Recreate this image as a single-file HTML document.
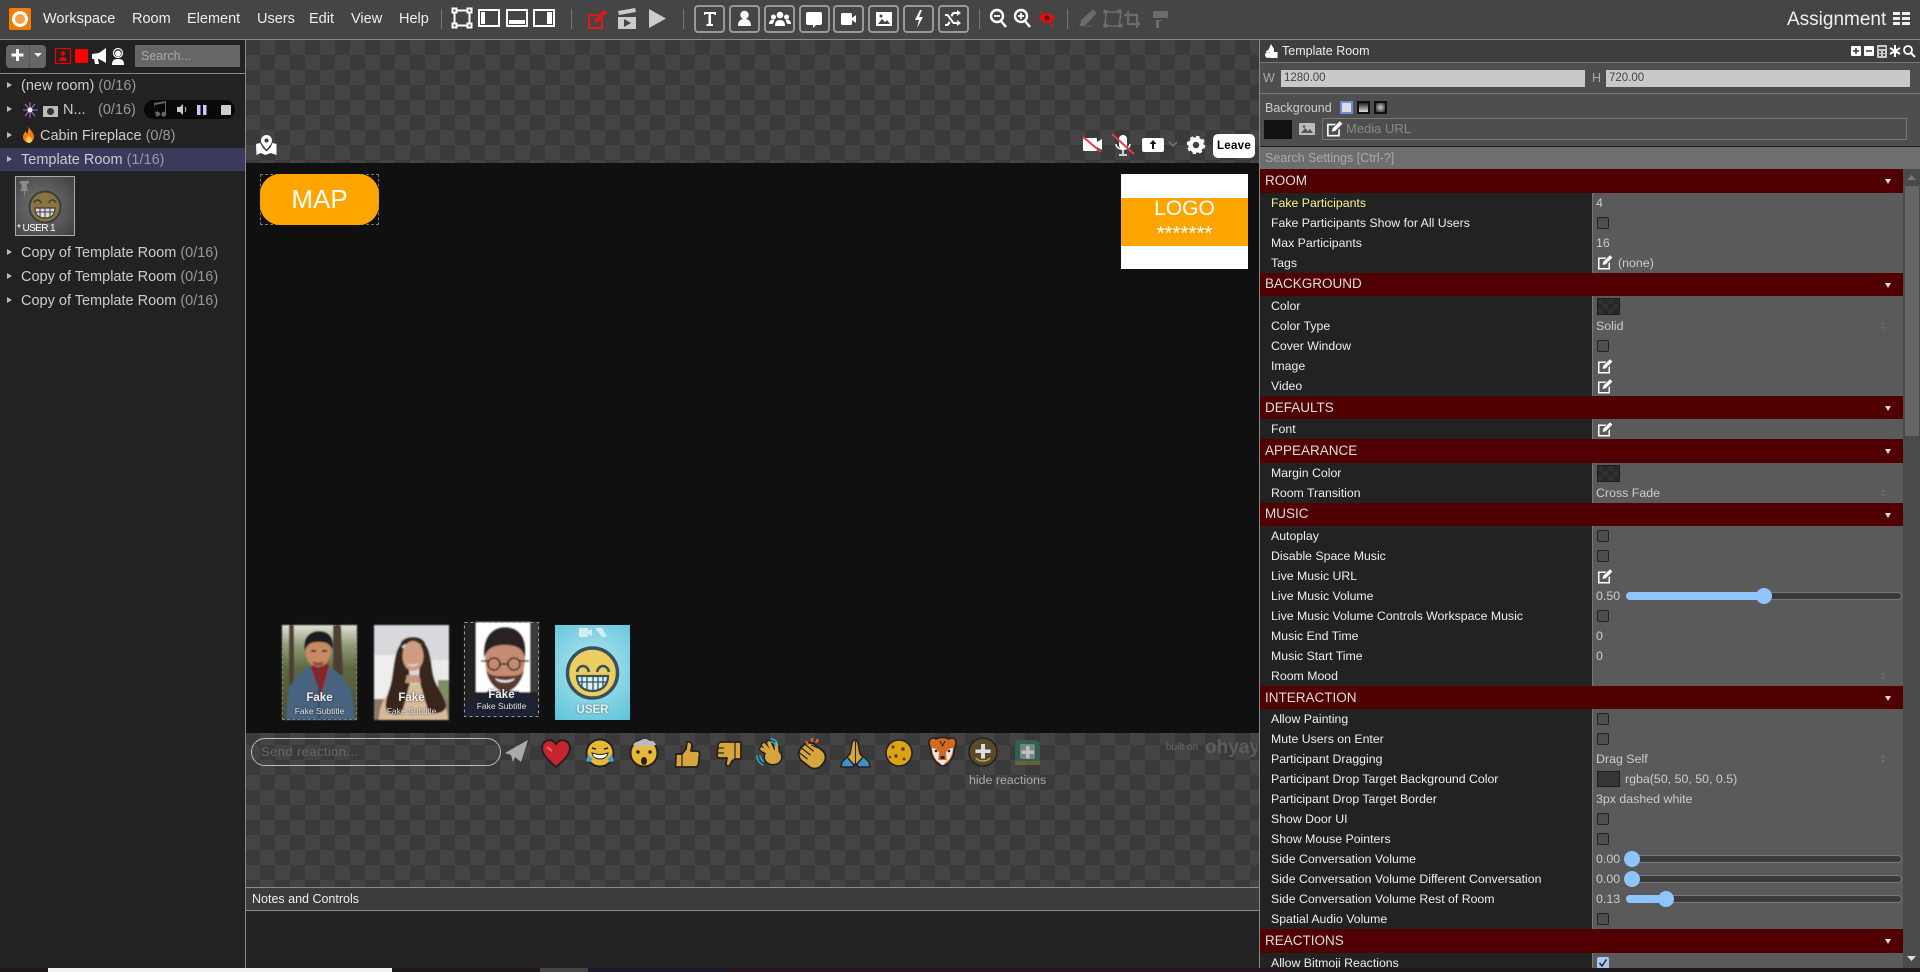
<!DOCTYPE html>
<html><head><meta charset="utf-8"><title>Assignment</title>
<style>
*{box-sizing:border-box}
html,body{margin:0;padding:0;width:1920px;height:972px;overflow:hidden;background:#222;font-family:"Liberation Sans",sans-serif;color:#eee}
.a{position:absolute}
svg{position:absolute;overflow:visible}
.chk{background-color:#3a3a3a;background-image:conic-gradient(#444 25%,#3a3a3a 0 50%,#444 0 75%,#3a3a3a 0);background-size:30px 30px;background-position:-1px 0}
.m{position:absolute;top:10px;font-size:14.5px;line-height:18px;color:#eee}
.sep{position:absolute;top:9px;width:1px;height:20px;background:#777}
.box{position:absolute;top:5px;width:31px;height:28px;border:2px solid #999;border-radius:4px}
.rm{position:absolute;left:21px;font-size:14.5px;line-height:18px;color:#ccc;white-space:nowrap}
.rm i{font-style:normal;color:#999}
.tri{position:absolute;left:7px;width:0;height:0;border-left:5px solid #bbb;border-top:3px solid transparent;border-bottom:3px solid transparent}
.sec{position:absolute;left:1260px;width:643px;background:#500000;color:#ddd;font-size:13.5px;line-height:23px;padding-left:5px}
.sec:after{content:"";position:absolute;right:12px;top:10px;border-top:5px solid #ddd;border-left:3px solid transparent;border-right:3px solid transparent}
.l{position:absolute;left:1271px;font-size:12.3px;line-height:16px;color:#eee;white-space:nowrap}
.v{position:absolute;left:1596px;font-size:12.4px;line-height:16px;color:#ccc;white-space:nowrap}
.cb{position:absolute;left:1597px;width:12px;height:12px;border:1px solid #222;border-radius:2px;background:#4e4e4e}
.sw{position:absolute;left:1597px;width:23px;height:17px;background-color:#2a2a2a;background-image:conic-gradient(#282828 25%,#303030 0 50%,#282828 0 75%,#303030 0);background-size:10px 10px;border:1px solid #1c1c1c}
.tr{position:absolute;left:1626px;width:276px;height:8px;border-radius:4px;background:#3a3a3a;border:1px solid #777}
.fl{position:absolute;left:1626px;height:8px;border-radius:4px;background:#90c4ff}
.th{position:absolute;width:16px;height:16px;border-radius:8px;background:#90c4ff}
.st{position:absolute;left:1881px;width:5px;height:9px;color:#666}
.st:before{content:"";position:absolute;left:0;top:0;border-bottom:3px solid #6c6c6c;border-left:2.500px solid transparent;border-right:2.500px solid transparent}
.st:after{content:"";position:absolute;left:0;top:5px;border-top:3px solid #6c6c6c;border-left:2.500px solid transparent;border-right:2.500px solid transparent}
.t1{position:absolute;left:0;width:100%;text-align:center;color:#eee;font-weight:bold;font-size:11.5px;line-height:14px;text-shadow:0 0 2px #333}
.t2{position:absolute;left:0;width:100%;text-align:center;color:#ddd;font-size:8.5px;line-height:11px;text-shadow:0 0 2px #333}
</style></head><body>
<svg width="0" height="0" style="position:absolute"><defs>
<symbol id="e" viewBox="0 0 16 16"><path d="M1 3.500h8.500L8 5H2.500v9h9V9.500L13 8v7.500H1z" fill="#fff"/><path d="M5.500 11l.8-3.200L13 1.200l2.400 2.400-6.700 6.600z" fill="#fff"/></symbol>
<filter id="b" x="-5%" y="-5%" width="110%" height="110%"><feGaussianBlur stdDeviation=".7"/></filter>
</defs></svg>

<!-- top bar -->
<div class="a" style="left:0;top:0;width:1920px;height:39px;background:#454545"></div>
<div class="a" style="left:0;top:39px;width:1920px;height:1px;background:#8a8a8a"></div>
<div class="a" style="left:9px;top:8px;width:22px;height:22px;background:#f57c00;border-radius:2px"></div>
<div class="a" style="left:12px;top:11px;width:16px;height:16px;border:3.500px solid #fff;border-radius:50%;background:#f9a14a"></div>
<span class="m" style="left:43px">Workspace</span><span class="m" style="left:132px">Room</span><span class="m" style="left:187px">Element</span><span class="m" style="left:257px">Users</span><span class="m" style="left:309px">Edit</span><span class="m" style="left:351px">View</span><span class="m" style="left:399px">Help</span>
<div class="sep" style="left:441px"></div><div class="sep" style="left:571px"></div><div class="sep" style="left:683px"></div><div class="sep" style="left:979px"></div><div class="sep" style="left:1067px"></div>
<svg style="left:0;top:0" width="1200" height="39">
<g fill="none" stroke="#fff" stroke-width="2"><rect x="454.500" y="10.500" width="15" height="15"/><rect x="452.500" y="8.500" width="4" height="4" fill="#454545"/><rect x="467.500" y="8.500" width="4" height="4" fill="#454545"/><rect x="452.500" y="23.500" width="4" height="4" fill="#454545"/><rect x="467.500" y="23.500" width="4" height="4" fill="#454545"/>
<rect x="479" y="10" width="20" height="16"/><rect x="507" y="10" width="20" height="16"/><rect x="534" y="10" width="20" height="16"/></g>
<rect x="481" y="12" width="4" height="12" fill="#fff"/><rect x="509" y="20" width="16" height="4" fill="#fff"/><rect x="547" y="12" width="5" height="12" fill="#fff"/>
<path d="M588 14h11l-2 2h-7v11h11v-7l2-2v11h-15z" fill="#e01818"/><path d="M594 23l1-4 9-9 3 3-9 9z" fill="#e01818"/>
<path d="M618 17h18v12h-18z" fill="#ccc"/><path d="M618 11l17-3 1 4-17 3z" fill="#ccc"/><path d="M624 19v8l7-4z" fill="#454545"/>
<path d="M649 9l17 9.500-17 9.500z" fill="#ccc"/>
<g fill="#fff">
<path d="M704 12h12v3h-1.500l-.5-1h-3v10h2v2h-6.500v-2h2V14h-3l-.5 1H704z"/>
<circle cx="744.500" cy="15" r="4.200"/><path d="M738 26c0-5 2.500-7 6.500-7s6.500 2 6.500 7z"/>
<circle cx="780" cy="15" r="3.300"/><circle cx="773.500" cy="17" r="2.500"/><circle cx="786.500" cy="17" r="2.500"/><path d="M775 26c0-4 1.500-6 5-6s5 2 5 6zM769 24c0-3 2-4.500 4.500-4.500l1 1-2 3.500zM791 24c0-3-2-4.500-4.500-4.500l-1 1 2 3.500z"/>
<path d="M808 12h12a2 2 0 0 1 2 2v9a2 2 0 0 1-2 2h-4l-3 3v-3h-5a2 2 0 0 1-2-2v-9a2 2 0 0 1 2-2z"/>
<rect x="841" y="13" width="11" height="12" rx="1.500"/><path d="M852 18l4-3v8l-4-3z"/>
<path d="M876 12h16v14h-16z"/>
<path d="M920 10l-5 10h4l-2 8 6-11h-4l3-7z"/>
<path d="M945 14h3l6 8h3v-2l4 3-4 3v-2h-4l-6-8h-2zM957 12v-2l4 3-4 3v-2h-3l-2 3-1.500-2 2.500-3zM945 24h2l2-3 1.500 2-2.500 3h-3z"/>
</g>
<path d="M878 24l4-5 3 3 2-2 3 4z" fill="#454545"/><circle cx="881" cy="16" r="1.500" fill="#454545"/>
<g fill="none" stroke="#fff" stroke-width="2.400"><circle cx="997" cy="16" r="6"/><path d="M1001 21l5 6"/><circle cx="1021" cy="16" r="6"/><path d="M1025 21l5 6"/></g>
<path d="M994 16h6M1018 16h6M1021 13v6" stroke="#fff" stroke-width="1.800"/>
<path d="M1039 18c3-6 13-6 16 0-3 6-13 6-16 0z" fill="#e01010"/><path d="M1040 11l13 15" stroke="#e01010" stroke-width="1.800"/><circle cx="1047" cy="18" r="2.500" fill="#700"/>
<g fill="#6c6c6c" stroke="#6c6c6c"><path d="M1080 26l2-6 11-10 3 3-10 11z"/><path d="M1082 26h12" stroke-dasharray="2 1" fill="none"/><path d="M1106 12h15l-2 14h-14z" fill="none" stroke-width="1.600"/><rect x="1104" y="24" width="3" height="3"/><rect x="1118" y="10" width="3" height="3"/><rect x="1104" y="10" width="3" height="3"/><rect x="1119" y="24" width="3" height="3"/>
<path d="M1128 11v13h12M1124 15h13v13" fill="none" stroke-width="2.200"/>
<path d="M1153 11h15v7h-6v3h-3v7h-3v-8h6v-2h-9z" stroke="none"/></g>
</svg>
<div class="box" style="left:694px"></div><div class="box" style="left:729px"></div><div class="box" style="left:764px"></div><div class="box" style="left:799px"></div><div class="box" style="left:833px"></div><div class="box" style="left:868px"></div><div class="box" style="left:903px"></div><div class="box" style="left:938px"></div>
<div class="a" style="left:1787px;top:8px;font-size:19px;line-height:24px;color:#eee">Assignment</div>
<svg style="left:1893px;top:12px" width="18" height="15"><path d="M0 0h7v3H0zM9 0h8v3H9zM0 5h7v3H0zM9 5h8v3H9zM0 10h7v3H0zM9 10h8v3H9z" fill="#eee"/></svg>

<!-- left sidebar -->
<div class="a" style="left:0;top:40px;width:245px;height:928px;background:#222"></div>
<div class="a" style="left:245px;top:40px;width:1px;height:928px;background:#888"></div>
<div class="a" style="left:0;top:73px;width:245px;height:1px;background:#888"></div>
<div class="a" style="left:6px;top:45px;width:40px;height:23px;background:#666;border-radius:4px"></div>
<div class="a" style="left:29px;top:45px;width:1px;height:23px;background:#555"></div>
<svg style="left:0;top:40px" width="245" height="33">
<path d="M16 9h3v4.500h4.500v3H19V21h-3v-4.500h-4.500v-3H16z" fill="#fff"/><path d="M34 13h8l-4 4z" fill="#eee"/>
<rect x="55.500" y="8.500" width="15" height="15" fill="none" stroke="#e00" stroke-width="1.200"/><circle cx="63" cy="13.500" r="2.200" fill="#e00"/><path d="M59 21c0-3 2-4 4-4s4 1 4 4z" fill="#e00"/>
<rect x="75" y="9" width="13" height="14" fill="#f00"/>
<path d="M92 14l7-1 7-5v15l-7-4h-1l1 5h-4l-1-5h-2z" fill="#fff"/>
<circle cx="118" cy="13" r="4.500" fill="none" stroke="#fff" stroke-width="1.200"/><circle cx="118" cy="13.500" r="3" fill="#fff"/><path d="M112 25c0-5 2-6 6-6s6 1 6 6z" fill="#fff"/>
</svg>
<div class="a" style="left:135px;top:45px;width:105px;height:22px;background:#666;color:#aaa;font-size:12.500px;line-height:22px;padding-left:6px">Search...</div>

<div class="tri" style="top:82px"></div><div class="rm" style="top:77px">(new room) <i>(0/16)</i></div>
<div class="tri" style="top:106px"></div><div class="rm" style="top:101px;left:63px">N...</div><div class="rm" style="top:101px;left:98px"><i>(0/16)</i></div>
<svg style="left:22px;top:100px" width="40" height="20"><path d="M8 2v16M1 10h15M3 4l10 12M13 4L3 16" stroke="#a66cc8" stroke-width="1.100"/><circle cx="8" cy="10" r="2.500" fill="#eee"/><rect x="21" y="6" width="15" height="11" fill="#bbb"/><circle cx="28.500" cy="11.500" r="3.500" fill="#333"/></svg>
<div class="a" style="left:144px;top:100px;width:91px;height:19px;background:#080808;border-radius:10px"></div>
<svg style="left:144px;top:100px" width="91" height="19"><path d="M12 16a2.500 2.500 0 1 0-1-2V5l10-2v9a2.500 2.500 0 1 0 1 1V1L10 3z" fill="#666"/><path d="M33 7h3l3-3v11l-3-3h-3z" fill="#ccc"/><path d="M41 7c1 1 1 4 0 5" stroke="#ccc" fill="none"/><rect x="53" y="5" width="3.500" height="10" fill="#c8c8ff"/><rect x="59" y="5" width="3.500" height="10" fill="#c8c8ff"/><rect x="77" y="5" width="10" height="10" rx="1" fill="#ccc"/></svg>
<div class="tri" style="top:132px"></div><div class="rm" style="top:127px;left:40px">Cabin Fireplace <i>(0/8)</i></div>
<svg style="left:23px;top:126px" width="12" height="18"><path d="M5 0c1 3 6 6 6 11a5.500 5.500 0 0 1-11 0c0-3 2-4 2-6 1 1 2 2 2 3 1-2 2-5 1-8z" fill="#f47a14"/><path d="M6 9c0 2 3 3 3 5a3 3 0 0 1-6 0c0-2 2-3 3-5z" fill="#fbd14b"/></svg>
<div class="a" style="left:0;top:148px;width:245px;height:23px;background:#3a3a5c"></div>
<div class="tri" style="top:156px"></div><div class="rm" style="top:151px">Template Room <i>(1/16)</i></div>
<div class="a" style="left:15px;top:176px;width:60px;height:60px;border:1px solid #aaa;background:radial-gradient(circle at 45% 50%,#777,#3f3f3f)"></div>
<svg style="left:15px;top:176px" width="60" height="60">
<path d="M5 5h9v2l-2 1v5l2 2H10.500l-1 7-1-7H4.500l2-2V8l-2-1z" fill="#8a8a8a"/>
<circle cx="30" cy="31" r="15.500" fill="#8a7540" stroke="#3c3c3c" stroke-width="2"/>
<path d="M19 27c1-4 6-4 7 0M34 27c1-4 6-4 7 0" fill="none" stroke="#3c3c3c" stroke-width="1.500"/>
<path d="M20 32h20c0 7-4 10-10 10s-10-3-10-10z" fill="#ddd" stroke="#3c3c3c" stroke-width="1.200"/><path d="M25 32v9M30 32v10M35 32v9M21 36h18" stroke="#3c3c3c"/>
</svg>
<div class="a" style="left:17px;top:222px;font-size:10px;line-height:13px;color:#fff;letter-spacing:-.6px;white-space:nowrap">* USER 1</div>
<div class="tri" style="top:249px"></div><div class="rm" style="top:244px">Copy of Template Room <i>(0/16)</i></div>
<div class="tri" style="top:273px"></div><div class="rm" style="top:268px">Copy of Template Room <i>(0/16)</i></div>
<div class="tri" style="top:297px"></div><div class="rm" style="top:292px">Copy of Template Room <i>(0/16)</i></div>

<!-- center -->
<div class="a chk" style="left:246px;top:40px;width:1014px;height:123px"></div>
<div class="a" style="left:246px;top:163px;width:1014px;height:570px;background:#101010"></div>
<div class="a chk" style="left:246px;top:733px;width:1014px;height:154px;background-position:-1px -3px"></div>
<div class="a" style="left:246px;top:887px;width:1014px;height:1px;background:#8a8a8a"></div>
<div class="a" style="left:246px;top:888px;width:1014px;height:23px;background:#3c3c3c;color:#eee;font-size:12.500px;line-height:23px;padding-left:6px">Notes and Controls</div>
<div class="a" style="left:246px;top:910px;width:1014px;height:1px;background:#8a8a8a"></div>
<div class="a" style="left:1259px;top:40px;width:1px;height:928px;background:#888"></div>

<svg style="left:256px;top:135px" width="21" height="20"><path d="M10.500 0a5.500 5.500 0 0 1 5.500 5.500c0 3-3 6-5.500 9-2.500-3-5.500-6-5.500-9A5.500 5.500 0 0 1 10.500 0z" fill="#fff"/><circle cx="10.500" cy="5.500" r="2" fill="#3a3a3a"/><path d="M0 9l4-1 3 5 3.500 3.500 4-4 2-4.500 4 1v11l-6-2-5 2-5-2-4 2z" fill="#fff"/></svg>
<svg style="left:1080px;top:130px" width="180" height="30">
<rect x="3" y="8" width="14" height="13" rx="1" fill="#fff"/><path d="M17 12l5-3v11l-5-3z" fill="#fff"/><path d="M3 7l18 15" stroke="#e33b45" stroke-width="2"/>
<rect x="39" y="5" width="8" height="14" rx="4" fill="#fff"/><path d="M36 14c0 7 14 7 14 0M43 20v4M39 25h8" stroke="#fff" fill="none" stroke-width="1.500"/><path d="M32 4l22 20" stroke="#e33b45" stroke-width="2"/>
<rect x="62" y="8" width="22" height="14" rx="2" fill="#fff"/><path d="M73 10l3.500 4h-2.500v5h-2v-5h-2.500z" fill="#111"/><path d="M89 12l4 4 4-4" stroke="#777" stroke-width="1.500" fill="none"/>
<circle cx="116" cy="15" r="5.500" fill="none" stroke="#fff" stroke-width="4.500"/><circle cx="116" cy="15" r="8" fill="none" stroke="#fff" stroke-width="2.500" stroke-dasharray="3.300 2.980"/>
</svg>
<div class="a" style="left:1213px;top:134px;width:42px;height:24px;background:#fff;border-radius:5px;color:#000;font-weight:bold;font-size:11.500px;line-height:24px;text-align:center;letter-spacing:.3px">Leave</div>

<div class="a" style="left:260px;top:174px;width:119px;height:51px;border:1px dashed #777"></div>
<div class="a" style="left:260px;top:174px;width:119px;height:51px;background:#ffa500;border-radius:20px;color:#fff;font-size:26px;line-height:50px;text-align:center">MAP</div>
<div class="a" style="left:1121px;top:174px;width:127px;height:95px;background:#fff"></div>
<div class="a" style="left:1121px;top:198px;width:127px;height:48px;background:#ffa500;color:#fff;text-align:center">
<div class="a" style="left:0;width:127px;top:-2px;font-size:21px;line-height:26px">LOGO</div><div class="a" style="left:0;width:127px;top:24px;font-size:20.500px;line-height:24px">*******</div></div>

<!-- tiles -->
<svg style="left:282px;top:625px" width="75" height="95"><g filter="url(#b)">
<defs><linearGradient id="fo" x1="0" y1="0" x2="0" y2="1"><stop offset="0" stop-color="#dfe2d4"/><stop offset=".22" stop-color="#8f9a78"/><stop offset=".45" stop-color="#5d6a40"/><stop offset="1" stop-color="#4a4e38"/></linearGradient></defs>
<rect width="75" height="95" fill="url(#fo)"/><path d="M7 0h5v60H7zM51 0h8l2 50H51z" fill="#4e3e30"/>
<path d="M4 95l2-24c2-14 12-25 22-30h18c10 5 20 16 24 30l3 24z" fill="#46647f"/><path d="M29 43l10 28 8-30-2-3H31z" fill="#8a2424"/>
<path d="M37 37v58" stroke="#2c4054" stroke-width="1.200"/>
<ellipse cx="36" cy="26" rx="12.500" ry="16" fill="#c88a62"/><path d="M30 36c3 2 9 2 12 0l-2 5h-8z" fill="#8a5040"/>
<path d="M23 26c-3-12 4-20 14-20s16 7 13 19c-2-6-5-8-13-8s-12 2-14 9z" fill="#1e1a1c"/>
<path d="M29 26h5M40 26h5" stroke="#2a1a14" stroke-width="1.800"/></g>
</svg>
<svg style="left:374px;top:625px" width="75" height="95"><g filter="url(#b)">
<rect width="75" height="95" fill="#d8d9dc"/><rect y="30" width="26" height="44" fill="#eeeeee"/><rect x="58" y="35" width="17" height="38" fill="#eaeaea"/><rect x="64" y="55" width="11" height="22" fill="#7f8f60"/>
<rect y="74" width="75" height="21" fill="#8a7a6a"/>
<path d="M5 95c0-16 8-30 22-36h24c13 6 22 18 23 36z" fill="#d9bb9a"/>
<path d="M26 20c-7 10-6 30-10 42-3 10-6 18-3 24 4 4 10 4 14 2 4-6 6-22 9-30l-2-30zM52 20c6 10 5 26 9 36 3 8 11 18 11 26-2 6-9 7-16 6-5-8-7-24-11-32l1-36z" fill="#38261f"/>
<path d="M26 24c-1-9 6-12 13-12s14 3 13 13c-2-5-7-7-13-7s-11 2-13 6z" fill="#38261f"/>
<ellipse cx="39" cy="31" rx="10.500" ry="15" fill="#cf9c80"/><path d="M33 50h12l2 8H31z" fill="#c8987a"/>
<path d="M33 38c3 2.500 9 2.500 12 0-2 4-10 4-12 0z" fill="#f4eeea"/></g>
</svg>
<svg style="left:464px;top:622px" width="75" height="95"><g filter="url(#b)">
<rect width="75" height="95" fill="#202020"/><rect x="12" width="54" height="70" fill="#fff"/><rect x="66" width="9" height="70" fill="#3a3a3a"/><path d="M0 95V83l24-14h30l21 11v15z" fill="#1c2233"/>
<ellipse cx="41" cy="38" rx="20" ry="27" fill="#c68c72"/><path d="M20 36C18 14 29 5 41 5s23 8 20 31c-2-8-6-13-20-13s-18 5-21 13z" fill="#2a2422"/><path d="M22 48c2 13 12 22 19 22s17-9 19-22c-3 6-8 6-19 6s-16 0-19-6z" fill="#5a3a30"/>
<g fill="none" stroke="#2b1d1d" stroke-width="1.500"><circle cx="30" cy="42" r="6"/><circle cx="50" cy="42" r="6"/><path d="M36 42h8M17 39h7M56 39h9"/></g><path d="M31 56c6 3 14 3 20 0-2 6-18 6-20 0z" fill="#eee"/></g>
<rect x=".5" y=".5" width="74" height="94" fill="none" stroke="#999" stroke-dasharray="3 3"/>
</svg>
<div class="a" style="left:282px;top:625px;width:75px;height:95px;border:1px dashed #999;opacity:.7"></div>
<div class="a" style="left:282px;top:625px;width:75px;height:95px"><div class="t1" style="top:66px">Fake</div><div class="t2" style="top:81px">Fake Subtitle</div></div>
<div class="a" style="left:374px;top:625px;width:75px;height:95px"><div class="t1" style="top:66px">Fake</div><div class="t2" style="top:81px">Fake Subtitle</div></div>
<div class="a" style="left:464px;top:622px;width:75px;height:95px"><div class="t1" style="top:66px">Fake</div><div class="t2" style="top:79px">Fake Subtitle</div></div>
<div class="a" style="left:555px;top:625px;width:75px;height:95px;background:radial-gradient(circle at 50% 45%,#b8e6ef,#5cc4da)"></div>
<svg style="left:555px;top:625px" width="75" height="95">
<circle cx="37.500" cy="48" r="25" fill="#eccd62" stroke="#37525a" stroke-width="3.500"/>
<path d="M22 47c2-8 10-8 12 0M42 47c2-8 10-8 12 0" fill="none" stroke="#37525a" stroke-width="2.600"/>
<path d="M22 51h31c0 10-7 15-15.500 15S22 61 22 51z" fill="#d8f1f6" stroke="#37525a" stroke-width="2.200"/><path d="M27 51v12M32 51v15M38 51v15M43 51v15M48 51v12M23 57h29" stroke="#37525a" stroke-width="1.300"/>
<path d="M24 3h9v9h-9zM33 6l4-2v7l-4-2zM40 3l5 0 2 0 5 9h-5z" fill="#d2eef3"/>
</svg>
<div class="a" style="left:555px;top:703px;width:75px;text-align:center;color:#eee;font-weight:bold;font-size:11.500px;line-height:14px;text-shadow:0 0 2px #477">USER</div>

<!-- reactions -->
<div class="a" style="left:251px;top:738px;width:250px;height:28px;border:1.500px solid #bbb;border-radius:14px;color:#666;font-size:13px;line-height:25px;padding-left:9px;letter-spacing:.4px">Send reaction...</div>
<svg style="left:0;top:720px" width="1080" height="60">
<path d="M505 33l23-13-7 22-6-5-2 5-2-7z" fill="#aaa"/>
<path d="M556 47c-7-6-14-12-14-19 0-8 10-11 14-4 4-7 14-4 14 4 0 7-7 13-14 19z" fill="#c8242f" stroke="#222" stroke-width="2"/><path d="M547 27l5 4" stroke="#e07078" stroke-width="2"/>
<circle cx="600" cy="33" r="13.500" fill="#e8b838" stroke="#222" stroke-width="2"/><path d="M592 33c6 2 10 2 16 0-1 8-15 8-16 0z" fill="#fff" stroke="#222"/><path d="M588 35l-2 6 4 1 3-3zM612 35l2 6-4 1-3-3z" fill="#3aa4dc"/><path d="M592 28l4 1M608 28l-4 1" stroke="#222" stroke-width="1.600"/>
<circle cx="644" cy="33" r="13.500" fill="#e8b838" stroke="#222" stroke-width="2"/><path d="M633 25c2-4 5-3 8-5 3-2 7-1 9 1 3-1 5 1 6 4-6 2-17 2-23 0z" fill="#bbb"/><ellipse cx="644" cy="41" rx="3" ry="4" fill="#222"/><circle cx="638" cy="32" r="1.700" fill="#222"/><circle cx="650" cy="32" r="1.700" fill="#222"/>
<!-- thumbs up -->
<path d="M676 34h6l4-5 1-7c3-1 5 1 5 4l-1 5h6c2 0 3 2 2.500 4l-1 9c-.5 2-1.500 3-3 3h-20z" fill="#d8a53c" stroke="#222" stroke-width="1.800" stroke-linejoin="round"/><path d="M682 34v12" stroke="#222" stroke-width="1.200"/>
<!-- thumbs down -->
<path d="M741 22v17h-6l-3 2-2 4c-1 2-4 1-4-1l1-6h-7c-2 0-3-1-3-3l1-10c0-2 2-3 4-3z" fill="#d8a53c" stroke="#222" stroke-width="1.800" stroke-linejoin="round"/><path d="M735 22v17M717 28h7M717 33h7" stroke="#222" stroke-width="1.200"/>
<!-- wave -->
<g fill="none" stroke-linecap="round"><g stroke="#222" stroke-width="6.500"><path d="M771 34l-9-5M771 33l-7-8M773 32l-4-9M777 33l-1-9"/></g><ellipse cx="773" cy="37" rx="9.500" ry="8.500" fill="#222"/><g stroke="#d8a53c" stroke-width="3.500"><path d="M771 34l-9-5M771 33l-7-8M773 32l-4-9M777 33l-1-9"/></g><ellipse cx="773" cy="37" rx="8" ry="7" fill="#d8a53c"/>
<path d="M757 36c0 4 2 7 6 9M760 36c.5 2 1.500 4 3.500 5.500M771 19c3 0 6 2 7 6M771 22c2 0 3.500 1 4.500 3" stroke="#2aa8c4" stroke-width="1.500"/></g>
<!-- clap -->
<g transform="rotate(38 812 35)"><rect x="799" y="25" width="27" height="21" rx="9" fill="#d8a53c" stroke="#222" stroke-width="2"/><path d="M800 31h11M800 36h11M800 41h11" stroke="#222" stroke-width="1.200"/></g><path d="M811 25l7 3" stroke="#222"/>
<path d="M806 21l2 4M812 18v4M818 19l-2 4" stroke="#e0602a" stroke-width="2.400"/>
<!-- pray -->
<path d="M848 36l6 8-1 3h-12l1-5zM863 36l-6 8 1 3h12l-1-5z" fill="#3f8fc8" stroke="#222" stroke-width="1.500" stroke-linejoin="round"/>
<path d="M855 20c-2 0-3 2-3.500 6l-1.500 8-3 3 7 8 1-1 1 1 7-8-3-3-1.500-8c-.5-4-1.500-6-3.500-6z" fill="#d8a53c" stroke="#222" stroke-width="1.500" stroke-linejoin="round"/><path d="M855.500 21v23" stroke="#222" stroke-width="1.100"/>
<!-- cookie -->
<circle cx="899" cy="33" r="13" fill="#dca414" stroke="#222" stroke-width="1.600"/><circle cx="893" cy="27" r="1.600" fill="#6b3a1a"/><circle cx="903" cy="29" r="1.800" fill="#6b3a1a"/><circle cx="896" cy="36" r="1.700" fill="#6b3a1a"/><circle cx="904" cy="39" r="1.500" fill="#6b3a1a"/><circle cx="890" cy="37" r="1.300" fill="#6b3a1a"/>
<!-- tiger -->
<path d="M929 23c0-5 4-6 7-4 4-2 9-2 13 0 3-2 7-1 7 4 0 3-2 5-2 8 0 6-5 14-11 15-6-1-12-9-12-15 0-3-2-5-2-8z" fill="#d46a22" stroke="#222" stroke-width="1.600"/><path d="M932 28c3 0 6 2 7 5l-1 9c-3-3-6-9-6-14zM953 28c-3 0-6 2-7 5l1 9c3-3 6-9 6-14zM937 40h11l-5 5h-1z" fill="#e8e8e8"/><rect x="940.500" y="36" width="4" height="3" fill="#222"/><circle cx="936" cy="31" r="1.300" fill="#222"/><circle cx="949" cy="31" r="1.300" fill="#222"/><path d="M940 21l2.500 5 2.500-5" stroke="#222" fill="none"/>
<!-- plus smile -->
<circle cx="983" cy="32" r="14" fill="#594a2c" stroke="#222" stroke-width="1.600"/><path d="M981 24h4v5.500h5.500v3.500H985v5.500h-4V33h-5.500v-3.500h5.500z" fill="#ddd"/><path d="M976 38c3 4 11 4 14 0" stroke="#c8a850" fill="none" stroke-width="1.400"/>
<!-- green -->
<g opacity=".72"><rect x="1015" y="20" width="25" height="25" rx="4" fill="#2e6c5a"/><rect x="1015" y="41" width="25" height="4" fill="#7a7030"/><rect x="1020" y="24" width="15" height="15" rx="2" fill="#8aa0a0"/><path d="M1026 26h3.500v4.500h4.500v3.500h-4.500v4.500H1026V34h-4.500v-3.500h4.500z" fill="#eee"/></g>
</svg>
<div class="a" style="left:969px;top:773px;font-size:12.400px;line-height:14px;color:#aaa;white-space:nowrap">hide reactions</div>
<div class="a" style="left:1166px;top:741px;font-size:10px;line-height:14px;color:#666;white-space:nowrap">built on</div>
<div class="a" style="left:1205px;top:736px;width:52px;overflow:hidden;font-size:19px;line-height:24px;color:#5c5c5c;white-space:nowrap;font-weight:bold">ohyay</div>

<!-- right panel -->
<div class="a" style="left:1260px;top:40px;width:660px;height:22px;background:#3e3e3e"></div>
<div class="a" style="left:1260px;top:62px;width:660px;height:1px;background:#777"></div>
<div class="a" style="left:1260px;top:63px;width:660px;height:84px;background:#4e4e4e"></div>
<div class="a" style="left:1260px;top:93px;width:660px;height:1px;background:#777"></div>
<div class="a" style="left:1260px;top:146px;width:660px;height:1px;background:#1c1c1c"></div>
<svg style="left:1265px;top:44px" width="13" height="14"><path d="M6 0l3 5v3h3.500v6H5V8H1v-1c2 0 3-2 5-7z" fill="#fff"/><circle cx="3" cy="11" r="3" fill="#fff"/></svg>
<div class="a" style="left:1282px;top:43px;font-size:12.500px;line-height:16px;color:#eee">Template Room</div>
<svg style="left:1850px;top:44px" width="66" height="15">
<rect x="1" y="2" width="10" height="10" rx="1" fill="#fff"/><path d="M6 4v6M3 7h6" stroke="#333" stroke-width="1.500"/><rect x="14" y="2" width="10" height="10" rx="1" fill="#fff"/><path d="M16 7h6" stroke="#333" stroke-width="1.500"/>
<rect x="27" y="1" width="10" height="13" rx="1" fill="#ccc"/><path d="M28.500 3h7v2h-7zM29 7h2v2h-2zM33 7h2v2h-2zM29 10h2v2h-2zM33 10h2v2h-2z" fill="#444"/>
<path d="M45 1v12M40 4l10 6M50 4L40 10" stroke="#fff" stroke-width="2"/><circle cx="58" cy="6" r="4" fill="none" stroke="#fff" stroke-width="1.800"/><path d="M61 9l4 4" stroke="#fff" stroke-width="2"/></svg>
<div class="a" style="left:1263px;top:69px;font-size:12.500px;line-height:18px;color:#aaa">W</div>
<div class="a" style="left:1281px;top:70px;width:304px;height:17px;background:#c9c9c9;color:#444;font-size:11.500px;line-height:17px;padding-left:3px">1280.00</div>
<div class="a" style="left:1592px;top:69px;font-size:12.500px;line-height:18px;color:#aaa">H</div>
<div class="a" style="left:1606px;top:70px;width:304px;height:17px;background:#c9c9c9;color:#444;font-size:11.500px;line-height:17px;padding-left:3px">720.00</div>
<div class="a" style="left:1265px;top:100px;font-size:12.500px;line-height:16px;color:#ccc">Background</div>
<div class="a" style="left:1340px;top:101px;width:13px;height:13px;background:#ddd;border:2px solid #6a8fd8"></div>
<div class="a" style="left:1357px;top:101px;width:13px;height:13px;background:linear-gradient(#222,#ddd);border:2px solid #111"></div>
<div class="a" style="left:1374px;top:101px;width:13px;height:13px;background:radial-gradient(#ccc,#222);border:2px solid #111"></div>
<div class="a" style="left:1264px;top:120px;width:28px;height:19px;background:#111"></div>
<svg style="left:1299px;top:123px" width="17" height="13"><rect width="16" height="12" rx="1" fill="#bbb"/><path d="M2 10l4-5 3 3 2-2 3 4z" fill="#555"/><circle cx="5" cy="3.500" r="1.300" fill="#555"/></svg>
<div class="a" style="left:1322px;top:118px;width:585px;height:22px;border:1px solid #777;color:#888;font-size:13px;line-height:20px;padding-left:23px">Media URL</div>
<svg style="left:1326px;top:120px" width="17" height="17"><use href="#e" width="17" height="17"/></svg>
<div class="a" style="left:1260px;top:147px;width:660px;height:22px;background:#6e6e6e;color:#aaa;font-size:12.500px;line-height:22px;padding-left:5px">Search Settings [Ctrl-?]</div>

<div class="a" style="left:1260px;top:169px;width:643px;height:799px;background:#222"></div>
<div class="a" style="left:1592px;top:169px;width:311px;height:799px;background:#5a5a5a;border-left:1px solid #777"></div>
<div class="a" style="left:1903px;top:169px;width:17px;height:799px;background:#4a4a4a"></div>
<div class="a" style="left:1905px;top:186px;width:14px;height:250px;background:#666"></div>
<svg style="left:1903px;top:172px" width="17" height="10"><path d="M4 8l4.500-5 4.500 5z" fill="#777"/></svg>
<svg style="left:1903px;top:954px" width="17" height="10"><path d="M4 2h9l-4.500 5z" fill="#ddd"/></svg>

<div class="sec" style="top:169px;height:24px;line-height:24px">ROOM</div>
<div class="l" style="top:195px;color:#f5f58c">Fake Participants</div><div class="v" style="top:195px">4</div>
<div class="l" style="top:215px">Fake Participants Show for All Users</div><div class="cb" style="top:217px"></div>
<div class="l" style="top:235px">Max Participants</div><div class="v" style="top:235px">16</div>
<div class="l" style="top:255px">Tags</div><svg style="left:1597px;top:254px" width="16" height="16"><use href="#e" width="16" height="16"/></svg><div class="v" style="top:255px;left:1618px">(none)</div>

<div class="sec" style="top:273px;height:23px;line-height:21px">BACKGROUND</div>
<div class="l" style="top:298px">Color</div><div class="sw" style="top:298px"></div>
<div class="l" style="top:318px">Color Type</div><div class="v" style="top:318px">Solid</div><div class="st" style="top:322px"></div>
<div class="l" style="top:338px">Cover Window</div><div class="cb" style="top:340px"></div>
<div class="l" style="top:358px">Image</div><svg style="left:1597px;top:358px" width="16" height="16"><use href="#e" width="16" height="16"/></svg>
<div class="l" style="top:378px">Video</div><svg style="left:1597px;top:378px" width="16" height="16"><use href="#e" width="16" height="16"/></svg>

<div class="sec" style="top:396px;height:23px">DEFAULTS</div>
<div class="l" style="top:421px">Font</div><svg style="left:1597px;top:421px" width="16" height="16"><use href="#e" width="16" height="16"/></svg>

<div class="sec" style="top:439px;height:24px;line-height:24px">APPEARANCE</div>
<div class="l" style="top:465px">Margin Color</div><div class="sw" style="top:465px"></div>
<div class="l" style="top:485px">Room Transition</div><div class="v" style="top:485px">Cross Fade</div><div class="st" style="top:489px"></div>

<div class="sec" style="top:503px;height:23px;line-height:21px">MUSIC</div>
<div class="l" style="top:528px">Autoplay</div><div class="cb" style="top:530px"></div>
<div class="l" style="top:548px">Disable Space Music</div><div class="cb" style="top:550px"></div>
<div class="l" style="top:568px">Live Music URL</div><svg style="left:1597px;top:568px" width="16" height="16"><use href="#e" width="16" height="16"/></svg>
<div class="l" style="top:588px">Live Music Volume</div><div class="v" style="top:588px">0.50</div><div class="tr" style="top:592px"></div><div class="fl" style="top:592px;width:138px"></div><div class="th" style="top:588px;left:1756px"></div>
<div class="l" style="top:608px">Live Music Volume Controls Workspace Music</div><div class="cb" style="top:610px"></div>
<div class="l" style="top:628px">Music End Time</div><div class="v" style="top:628px">0</div>
<div class="l" style="top:648px">Music Start Time</div><div class="v" style="top:648px">0</div>
<div class="l" style="top:668px">Room Mood</div><div class="st" style="top:672px"></div>

<div class="sec" style="top:686px;height:23px">INTERACTION</div>
<div class="l" style="top:711px">Allow Painting</div><div class="cb" style="top:713px"></div>
<div class="l" style="top:731px">Mute Users on Enter</div><div class="cb" style="top:733px"></div>
<div class="l" style="top:751px">Participant Dragging</div><div class="v" style="top:751px">Drag Self</div><div class="st" style="top:755px"></div>
<div class="l" style="top:771px">Participant Drop Target Background Color</div><div class="sw" style="top:771px;height:16px;background:#353535"></div><div class="v" style="top:771px;left:1625px">rgba(50, 50, 50, 0.5)</div>
<div class="l" style="top:791px">Participant Drop Target Border</div><div class="v" style="top:791px">3px dashed white</div>
<div class="l" style="top:811px">Show Door UI</div><div class="cb" style="top:813px"></div>
<div class="l" style="top:831px">Show Mouse Pointers</div><div class="cb" style="top:833px"></div>
<div class="l" style="top:851px">Side Conversation Volume</div><div class="v" style="top:851px">0.00</div><div class="tr" style="top:855px"></div><div class="th" style="top:851px;left:1624px"></div>
<div class="l" style="top:871px">Side Conversation Volume Different Conversation</div><div class="v" style="top:871px">0.00</div><div class="tr" style="top:875px"></div><div class="th" style="top:871px;left:1624px"></div>
<div class="l" style="top:891px">Side Conversation Volume Rest of Room</div><div class="v" style="top:891px">0.13</div><div class="tr" style="top:895px"></div><div class="fl" style="top:895px;width:38px"></div><div class="th" style="top:891px;left:1658px"></div>
<div class="l" style="top:911px">Spatial Audio Volume</div><div class="cb" style="top:913px"></div>

<div class="sec" style="top:929px;height:24px;line-height:24px">REACTIONS</div>
<div class="l" style="top:955px">Allow Bitmoji Reactions</div>
<div class="cb" style="top:957px;background:#a8c8f0;border-color:#a8c8f0"></div>
<svg style="left:1597px;top:957px" width="12" height="12"><path d="M2.500 6l2.500 3 4.500-6.500" stroke="#222" stroke-width="1.500" fill="none"/></svg>

<!-- bottom strip -->
<div class="a" style="left:0;top:968px;width:1920px;height:4px;background:#1d161c"></div>
<div class="a" style="left:48px;top:968px;width:344px;height:4px;background:#f2f2f2"></div>
<div class="a" style="left:540px;top:968px;width:48px;height:4px;background:#444"></div>
<div class="a" style="left:588px;top:968px;width:140px;height:4px;background:#1a1a2c"></div>
<div class="a" style="left:728px;top:968px;width:560px;height:4px;background:#2a1522"></div>
</body></html>
